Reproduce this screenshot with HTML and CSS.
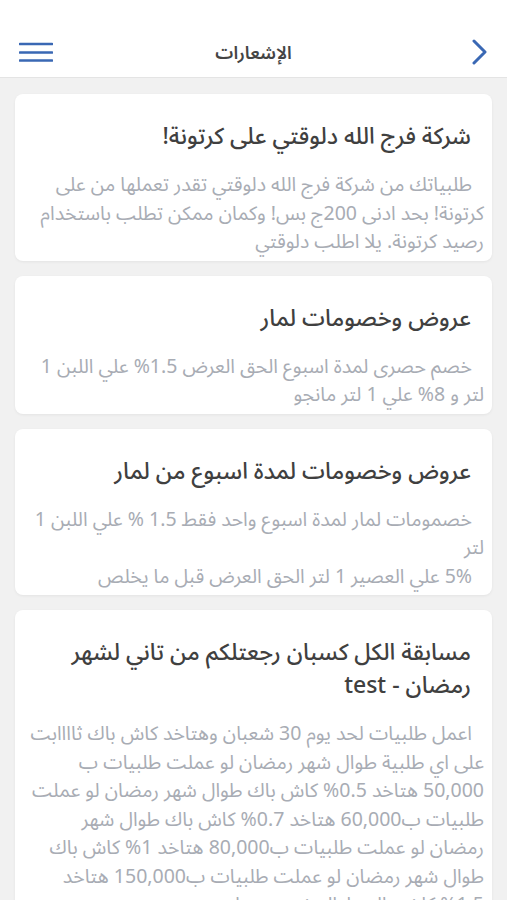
FILE: index.html
```html
<!DOCTYPE html>
<html lang="ar" dir="rtl">
<head>
    <meta charset="UTF-8">
    <meta name="viewport" content="width=device-width, initial-scale=1.0">
    <title>الإشعارات</title>
    <link rel="stylesheet" href="styles.css">
</head>
<body>
    <div class="header">
        <span class="back">
            <svg width="16" height="26" viewBox="0 0 16 26"><path d="M2 2 L13 13 L2 24" fill="none" stroke="#3a68b4" stroke-width="3" stroke-linecap="round" stroke-linejoin="round"/></svg>
        </span>
        <h1>الإشعارات</h1>
        <span class="menu">
            <svg width="34" height="20" viewBox="0 0 34 20"><path d="M1 2 H33 M1 10.5 H33 M1 18.5 H33" stroke="#3a68b4" stroke-width="2.6" stroke-linecap="round"/></svg>
        </span>
    </div>

    <div class="list">
        <div class="card">
            <h2>شركة فرج الله دلوقتي على كرتونة!</h2>
            <p>طلبياتك من شركة فرج الله دلوقتي تقدر تعملها من على كرتونة! بحد ادنى 200ج بس! وكمان ممكن تطلب باستخدام رصيد كرتونة. يلا اطلب دلوقتي</p>
        </div>
        <div class="card">
            <h2>عروض وخصومات لمار</h2>
            <p>خصم حصرى لمدة اسبوع الحق العرض 1.5% علي اللبن 1 لتر و 8% علي 1 لتر مانجو</p>
        </div>
        <div class="card">
            <h2>عروض وخصومات لمدة اسبوع من لمار</h2>
            <p>خصمومات لمار لمدة اسبوع واحد فقط 1.5 % علي اللبن 1 لتر</p>
            <p>5% علي العصير 1 لتر الحق العرض قبل ما يخلص</p>
        </div>
        <div class="card">
            <h2>مسابقة الكل كسبان رجعتلكم من تاني لشهر رمضان - test</h2>
            <p>اعمل طلبيات لحد يوم 30 شعبان وهتاخد كاش باك ثاااابت على اي طلبية طوال شهر رمضان لو عملت طلبيات ب 50,000 هتاخد 0.5% كاش باك طوال شهر رمضان لو عملت طلبيات ب60,000 هتاخد 0.7% كاش باك طوال شهر رمضان لو عملت طلبيات ب80,000 هتاخد 1% كاش باك طوال شهر رمضان لو عملت طلبيات ب150,000 هتاخد 1.5% كاش باك طوال شهر رمضان</p>
        </div>
    </div>
</body>
</html>
```
FILE: styles.css
```css
body {
    margin: 0;
    background-color: #f1f1f1;
    font-family: "Noto Sans", "Noto Sans Arabic", "DejaVu Sans", sans-serif;
}
.header {
    height: 78px;
    background-color: #fff;
    border-bottom: 1px solid #e4e4e4;
    box-sizing: border-box;
    display: flex;
    align-items: center;
    justify-content: space-between;
    padding: 26px 19px 0 19px;
}
.header h1 {
    flex: 1;
    margin: 0 18px 0 0;
    text-align: center;
    font-size: 18px;
    line-height: 26px;
    font-weight: 600;
    color: #444;
}
.back svg, .menu svg {
    display: block;
}
.list {
    padding: 16px 15px;
}
.card {
    background-color: #fff;
    border-radius: 8px;
    box-shadow: 0 1px 3px rgba(0, 0, 0, 0.06);
    margin-bottom: 15px;
    padding: 25px 8px 5px 11px;
}
.card h2 {
    margin: 0 13px 0 0;
    font-size: 23px;
    font-weight: 500;
    line-height: 33px;
    color: #404040;
}
.card p {
    margin: 18px 0 0 0;
    font-size: 19.5px;
    line-height: 28.5px;
    color: #a8acb4;
    text-indent: 12px;
}
.card p + p {
    margin-top: 0;
}
```
